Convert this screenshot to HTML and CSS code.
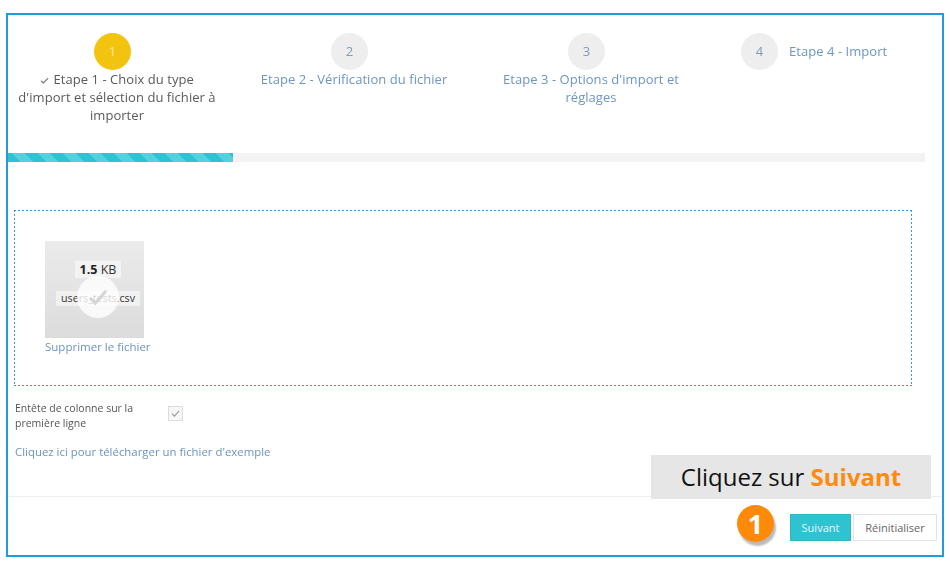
FILE: index.html
```html
<!DOCTYPE html>
<html>
<head>
  <meta charset="utf-8">
  <title>Import</title>
  <link rel="stylesheet" href="styles.css">
</head>
<body>
  <div class="frame">
    <!-- Wizard steps -->
    <div class="steps">
      <div class="step step-active">
        <div class="step-num">1</div>
        <div class="step-label">
          <svg class="step-check" viewBox="0 0 10 8" aria-hidden="true"><path d="M1 4.2 3.6 6.8 9 1.4"/></svg>
          Etape 1 - Choix du type d'import et sélection du fichier à importer
        </div>
      </div>
      <div class="step">
        <div class="step-num">2</div>
        <div class="step-label">Etape 2 - Vérification du fichier</div>
      </div>
      <div class="step">
        <div class="step-num">3</div>
        <div class="step-label">Etape 3 - Options d'import et réglages</div>
      </div>
      <div class="step step-inline">
        <div class="step-num">4</div>
        <div class="step-label">Etape 4 - Import</div>
      </div>
    </div>

    <div class="progress"><div class="progress-fill"></div></div>

    <div class="dropzone">
      <div class="file">
        <div class="file-thumb">
          <div class="file-size"><b>1.5</b> KB</div>
          <div class="file-name">users_tests.csv</div>
          <div class="file-mark">
            <svg viewBox="0 0 24 20" aria-hidden="true"><path d="M3 11 9 17 21 3"/></svg>
          </div>
        </div>
        <a class="link file-remove" href="#">Supprimer le fichier</a>
      </div>
    </div>

    <div class="option">
      <label class="option-label">Entête de colonne sur la première ligne</label>
      <span class="checkbox">
        <svg viewBox="0 0 12 10" aria-hidden="true"><path d="M2 5.2 4.8 8 10 2"/></svg>
      </span>
    </div>

    <a class="link sample-link" href="#">Cliquez ici pour télécharger un fichier d'exemple</a>

    <div class="actions">
      <button class="button button-primary">Suivant</button>
      <button class="button button-secondary">Réinitialiser</button>
    </div>

    <!-- Annotation over the screenshot -->
    <div class="callout">Cliquez sur <b>Suivant</b></div>
    <div class="badge">1</div>
  </div>
</body>
</html>
```

FILE: styles.css
```css
* {
  box-sizing: border-box;
  margin: 0;
  padding: 0;
}

body {
  font-family: 'Open Sans', 'Noto Sans', sans-serif;
  font-size: 11px;
  color: #555;
  background: #fff;
}

.frame {
  position: relative;
  display: flex;
  flex-direction: column;
  width: 938px;
  height: 544px;
  margin: 13px 0 0 6px;
  border: 2px solid #1f9ddb;
  overflow: hidden;
}

.link {
  color: #6a94c2;
  text-decoration: none;
}

.steps {
  display: flex;
  gap: 39px;
  height: 138px;
  padding: 18px 0 0 10px;
  filter: blur(0.4px);
}

.step {
  width: 198px;
  font-size: 13px;
  letter-spacing: 0.05px;
  line-height: 18px;
  text-align: center;
  color: #6c96c6;
}

.step-num {
  width: 37px;
  height: 37px;
  margin: 0 0 0 76px;
  border-radius: 50%;
  background: #eee;
  color: #7f9bb8;
  font-size: 13px;
  line-height: 37px;
  text-align: center;
}

.step-active {
  color: #5a5a5a;
}

.step-active .step-num {
  background: #f2c40f;
  color: #f8e9a8;
}

.step-check {
  width: 9px;
  height: 7px;
  margin-right: 1px;
  fill: none;
  stroke: #888;
  stroke-width: 1.6;
}

.step-inline {
  display: flex;
  gap: 11px;
  text-align: left;
}

.step-inline .step-num {
  flex: none;
  margin: 0 0 0 12px;
}

.step-inline .step-label {
  padding-top: 9px;
}

.progress {
  width: 917px;
  height: 9px;
  background: #f3f3f3;
}

.progress-fill {
  width: 225px;
  height: 100%;
  background: repeating-linear-gradient(45deg, #2fc3d2 0 9px, #56d0dc 9px 18px);
}

.dropzone {
  width: 898px;
  height: 176px;
  margin: 48px 0 0 6px;
  padding: 31px 0 0 31px;
  background:
    linear-gradient(90deg, #3a9ad9 50%, transparent 0) top left / 4px 1px repeat-x,
    linear-gradient(90deg, #3a9ad9 50%, transparent 0) bottom left / 4px 1px repeat-x,
    linear-gradient(#3a9ad9 50%, transparent 0) top left / 1px 4px repeat-y,
    linear-gradient(#3a9ad9 50%, transparent 0) top right / 1px 4px repeat-y;
}

.file {
  width: 106px;
  filter: blur(0.4px);
}

.file-thumb {
  position: relative;
  display: flex;
  flex-direction: column;
  align-items: center;
  width: 99px;
  height: 97px;
  padding: 20px 0 0 7px;
  background: linear-gradient(#ebebeb, #dcdcdc);
}

.file-size {
  height: 17px;
  padding: 0 5px;
  background: rgba(255, 255, 255, 0.5);
  color: #333;
  font-size: 12.5px;
  line-height: 17px;
}

.file-size b {
  font-weight: 700;
  color: #222;
}

.file-name {
  height: 15px;
  margin-top: 13px;
  padding: 0 5px;
  background: rgba(255, 255, 255, 0.5);
  color: #333;
  font-size: 10.7px;
  line-height: 15px;
  white-space: nowrap;
}

.file-mark {
  position: absolute;
  left: 32px;
  top: 35px;
  display: flex;
  align-items: center;
  justify-content: center;
  width: 42px;
  height: 42px;
  border-radius: 50%;
  background: rgba(255, 255, 255, 0.8);
}

.file-mark svg {
  width: 22px;
  height: 18px;
  fill: none;
  stroke: rgba(205, 205, 205, 0.8);
  stroke-width: 3.5;
}

.file-remove {
  display: block;
  margin-top: 1px;
  font-size: 11.5px;
  line-height: 15px;
  white-space: nowrap;
}

.option {
  display: flex;
  align-items: flex-start;
  margin: 15px 0 0 7px;
  filter: blur(0.3px);
}

.option-label {
  width: 153px;
  font-size: 10.5px;
  line-height: 15px;
  color: #555;
}

.checkbox {
  display: flex;
  align-items: center;
  justify-content: center;
  width: 15px;
  height: 15px;
  margin-top: 5px;
  border: 1px solid #ddd;
  background: #f7f7f7;
}

.checkbox svg {
  width: 11px;
  height: 9px;
  fill: none;
  stroke: #999;
  stroke-width: 1.2;
}

.sample-link {
  margin: 13px 0 0 7px;
  font-size: 11.4px;
  line-height: 16px;
  filter: blur(0.3px);
}

.actions {
  display: flex;
  justify-content: flex-end;
  gap: 2px;
  margin-top: 36px;
  padding: 17px 5px 0 0;
  border-top: 1px solid #eee;
}

.button {
  height: 27px;
  font-family: inherit;
  font-size: 11px;
  cursor: pointer;
}

.button-primary {
  width: 61px;
  border: 1px solid #2bb8c7;
  background: #2fc3d2;
  color: #e8f8fa;
}

.button-secondary {
  width: 84px;
  border: 1px solid #e3e3e3;
  background: #fff;
  color: #666;
}

.callout {
  position: absolute;
  left: 643px;
  top: 440px;
  width: 280px;
  height: 44px;
  background: #e6e6e6;
  color: #111;
  font-size: 24px;
  line-height: 44px;
  text-align: center;
}

.callout b {
  color: #ff8a10;
}

.badge {
  position: absolute;
  left: 729px;
  top: 490px;
  width: 37px;
  height: 37px;
  border-radius: 50%;
  background: #ff8a0a;
  box-shadow: 2px 4px 2px #bbb;
  color: #fff;
  font-size: 27px;
  font-weight: 700;
  line-height: 37px;
  text-align: center;
}
```
